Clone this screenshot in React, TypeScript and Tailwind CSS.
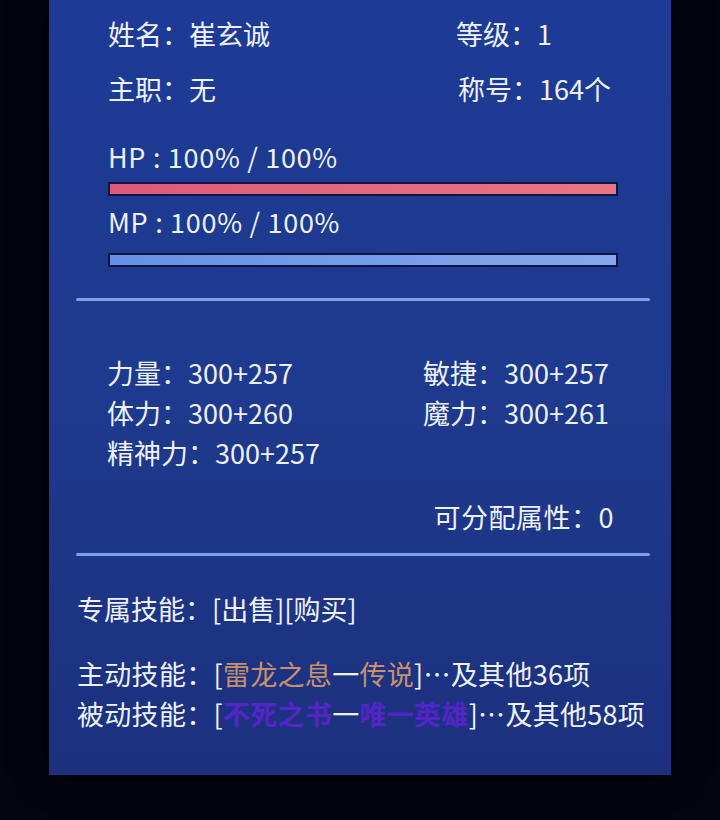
import type { ReactNode } from "react"

const font = { fontFamily: '"Noto Sans CJK SC", "Noto Sans", sans-serif' }

function Line({ children, className = "" }: { children: ReactNode; className?: string }) {
  return (
    <div className={`h-[40px] pb-[4px] flex items-center text-[27px] leading-none text-[#eef2ff] ${className}`}>
      {children}
    </div>
  )
}

function Bar({ fill }: { fill: string }) {
  return (
    <div className="ml-[59px] w-[510px] h-[14px] border-2 border-[#0d1548] bg-[#0d1548]">
      <div className={`h-full w-full ${fill}`} />
    </div>
  )
}

function Divider() {
  return <div className="ml-[27px] w-[574px] h-[3px] rounded-full bg-[#7d9fe6]" />
}

const stats = [
  ["力量", "300+257", "敏捷", "300+257"],
  ["体力", "300+260", "魔力", "300+261"],
  ["精神力", "300+257", "", ""],
]

export default function App() {
  return (
    <div className="w-[720px] h-[820px] overflow-hidden bg-[#03040e]" style={font}>
      {/* status panel, top edge runs off the page */}
      <div className="ml-[49px] w-[622px] h-[775px] flex flex-col bg-gradient-to-b from-[#1d3a96] via-[#1e3a8e] to-[#1c307e] shadow-[0_0_30px_rgba(0,0,0,0.6)]">
        <div className="h-[15px]" />
        <Line>
          <span className="ml-[59px] w-[348px]">姓名：崔玄诚</span>
          <span>等级：1</span>
        </Line>
        <div className="h-[15px]" />
        <Line>
          <span className="ml-[59px] w-[348px]">主职：无</span>
          <span className="ml-[2px]">称号：164个</span>
        </Line>

        <div className="h-[28px]" />
        <Line>
          <span className="ml-[59px] tracking-[0.7px]">HP : 100% / 100%</span>
        </Line>
        <div className="h-[4px]" />
        <Bar fill="bg-gradient-to-r from-[#dd5a78] to-[#ea7582]" />
        <div className="h-[7px]" />
        <Line>
          <span className="ml-[59px] tracking-[0.7px]">MP : 100% / 100%</span>
        </Line>
        <div className="h-[10px]" />
        <Bar fill="bg-gradient-to-r from-[#6690e4] to-[#84a8ea]" />

        <div className="h-[31px]" />
        <Divider />

        {/* attributes */}
        <div className="h-[53px]" />
        {stats.map(([a, av, b, bv]) => (
          <Line key={a}>
            <span className="ml-[58px] w-[316px]">
              {a}：{av}
            </span>
            {b && (
              <span>
                {b}：{bv}
              </span>
            )}
          </Line>
        ))}
        <div className="h-[24px]" />
        <Line className="justify-end pr-[57px]">
          <span className="tracking-[0.5px]">可分配属性：0</span>
        </Line>
        <div className="h-[15px]" />
        <Divider />

        {/* skills */}
        <div className="h-[34px]" />
        <Line>
          <span className="ml-[28px]">专属技能：[出售][购买]</span>
        </Line>
        <div className="h-[25px]" />
        <Line>
          <span className="ml-[28px] tracking-[0.3px]">
            主动技能：[<span className="text-[#c8916c]">雷龙之息</span>一
            <span className="text-[#c8916c]">传说</span>]…及其他36项
          </span>
        </Line>
        <Line>
          <span className="ml-[28px] tracking-[0.3px]">
            被动技能：[<span className="text-[#5325c8] font-semibold">不死之书</span>一
            <span className="text-[#5325c8] font-semibold">唯一英雄</span>]…及其他58项
          </span>
        </Line>
      </div>
    </div>
  )
}
